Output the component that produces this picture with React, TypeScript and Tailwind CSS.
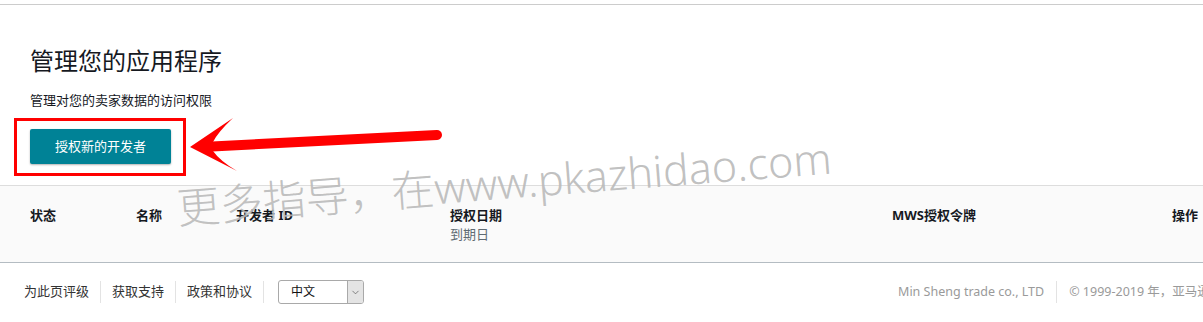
import { ChevronDown } from "lucide-react"

const font = { fontFamily: '"Noto Sans", "Noto Sans CJK SC", sans-serif' }

function Sep() {
  return <span className="w-px h-[22px] bg-[#e3e3e3]" />
}

export default function App() {
  return (
    <div
      className="relative w-full h-[322px] overflow-hidden bg-white text-[#111]"
      style={font}
    >
      <div className="pt-[4px]">
        <div className="border-t border-[#cccccc]" />

        {/* page heading */}
        <div className="px-[30px] pt-[40px]">
          <h1 className="text-[24px] leading-[32px] text-[#16191f]">管理您的应用程序</h1>
          <p className="mt-[13px] text-[13px] leading-[20px] text-[#16191f]">
            管理对您的卖家数据的访问权限
          </p>
          <div className="mt-[8px] ml-[-16px] inline-block border-[3px] border-[#ff0000] pl-[13px] pr-[12px] pt-[8px] pb-[9px]">
            <button
              type="button"
              className="h-[35px] w-[141px] rounded-[2px] bg-[#008296] text-[13px] text-white shadow-[0_1px_2px_rgba(0,0,0,0.3)]"
            >
              授权新的开发者
            </button>
          </div>
        </div>

        {/* table head */}
        <div className="mt-[9px] border-t border-b border-t-[#dddddd] border-b-[#b4bcc2] bg-[#fafafa] h-[78px] pt-[19px] pl-[30px] flex text-[13px] leading-[20px] font-bold text-[#16191f]">
          <div className="w-[106px] shrink-0">状态</div>
          <div className="w-[100px] shrink-0">名称</div>
          <div className="w-[214px] shrink-0">开发者 ID</div>
          <div className="w-[442px] shrink-0">
            <div>授权日期</div>
            <div className="font-normal text-[#5f6b73] leading-[18px]">到期日</div>
          </div>
          <div className="w-[280px] shrink-0">MWS授权令牌</div>
          <div className="shrink-0">操作</div>
        </div>

        {/* footer */}
        <div className="flex items-center pt-[17px] pl-[24px] text-[13px] text-[#333] whitespace-nowrap">
          <div className="flex items-center gap-[11px] shrink-0">
            <span>为此页评级</span>
            <Sep />
            <span>获取支持</span>
            <Sep />
            <span>政策和协议</span>
            <Sep />
          </div>
          <div className="ml-[14px] flex h-[24px] w-[86px] shrink-0 items-stretch overflow-hidden rounded-[3px] border border-[#a9a9a9] bg-white">
            <span className="flex-1 pl-[12px] leading-[22px] text-[12px] text-[#111]">中文</span>
            <span className="flex w-[16px] items-center justify-center border-l border-[#a9a9a9] bg-[#e4e4e4]">
              <ChevronDown size={11} strokeWidth={1.5} className="text-[#555]" />
            </span>
          </div>
          <div className="ml-[534px] flex shrink-0 items-center gap-[12px] text-[12.5px] text-[#9a9a9a]">
            <span>Min Sheng trade co., LTD</span>
            <Sep />
            <span>© 1999-2019 年，亚马逊公司或其附属公司</span>
          </div>
        </div>
      </div>

      {/* red annotation arrow */}
      <svg className="absolute left-0 top-0 pointer-events-none" width="1203" height="322">
        <line x1="212" y1="146.5" x2="437" y2="135" stroke="#ff0000" strokeWidth="10" strokeLinecap="round" />
        <path d="M190 147 L233 118 Q218 132 213 142 L213 151 Q220 161 237 171 Z" fill="#ff0000" />
      </svg>

      {/* watermark */}
      <div
        className="absolute left-[177px] top-[183px] origin-left -rotate-[4.4deg] text-[43px] leading-[50px] font-light text-[#b9b9b9]/90 whitespace-nowrap pointer-events-none"
      >
        更多指导，在www.pkazhidao.com
      </div>
    </div>
  )
}
